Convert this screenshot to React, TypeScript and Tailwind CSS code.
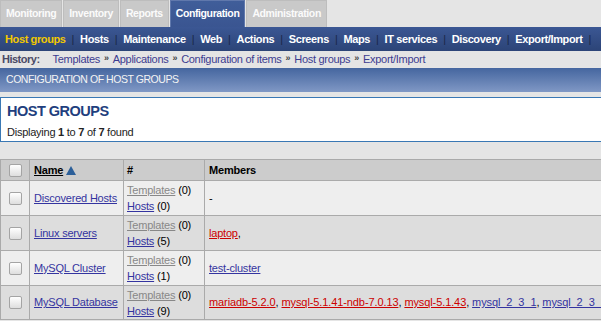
import React from "react";

function Checkbox() {
  return (
    <div className="w-[13px] h-[13px] rounded-[2px] border border-[#a4a4a4] bg-gradient-to-b from-[#ffffff] to-[#dedede]" />
  );
}

function Sep() {
  return <span className="mx-[6px] font-normal text-[#1a2748]">|</span>;
}

function Crumb() {
  return <span className="mx-[4px] text-[#444] font-bold text-[9px]">»</span>;
}

type Row = {
  name: string;
  hosts: number;
  members: React.ReactNode;
  bg: string;
  h: string;
};

const blue = "text-[#3434a0] underline decoration-[#3434a0]";
const red = "text-[#cc0000] underline decoration-[#cc0000]";

export default function App() {
  const tabs = ["Monitoring", "Inventory", "Reports", "Configuration", "Administration"];
  const sub = [
    "Host groups",
    "Hosts",
    "Maintenance",
    "Web",
    "Actions",
    "Screens",
    "Maps",
    "IT services",
    "Discovery",
    "Export/Import",
  ];
  const rows: Row[] = [
    { name: "Discovered Hosts", hosts: 0, members: <span className="text-black">-</span>, bg: "bg-[#eeeeee]", h: "h-[35px]" },
    {
      name: "Linux servers",
      hosts: 5,
      members: (
        <span>
          <span className={red}>laptop</span>,
        </span>
      ),
      bg: "bg-[#dddddd]",
      h: "h-[35px]",
    },
    { name: "MySQL Cluster", hosts: 1, members: <span className={blue}>test-cluster</span>, bg: "bg-[#eeeeee]", h: "h-[35px]" },
    {
      name: "MySQL Database",
      hosts: 9,
      members: (
        <span className="tracking-[-0.1px]">
          <span className={red}>mariadb-5.2.0</span>, <span className={red}>mysql-5.1.41-ndb-7.0.13</span>,{" "}
          <span className={red}>mysql-5.1.43</span>, <span className={blue}>mysql_2_3_1</span>,{" "}
          <span className={blue}>mysql_2_3_2</span>
        </span>
      ),
      bg: "bg-[#dddddd]",
      h: "h-[34px]",
    },
  ];

  return (
    <div className="w-[601px] h-[321px] overflow-hidden bg-[#e5e5e5] font-['Liberation_Sans',Arial,Helvetica,sans-serif]">
      {/* main tabs */}
      <div className="flex h-[27px] gap-[1px] whitespace-nowrap">
        {tabs.map((t) =>
          t === "Configuration" ? (
            <div
              key={t}
              className="h-full px-[6px] flex items-center text-[10.5px] font-bold tracking-[-0.4px] text-white bg-gradient-to-b from-[#405e9a] to-[#3a5591] shadow-[inset_1px_1px_0_#6078ac,inset_-1px_0_0_#6078ac]"
            >
              {t}
            </div>
          ) : (
            <div
              key={t}
              className="h-full px-[6px] flex items-center text-[10.5px] font-bold tracking-[-0.4px] text-[#fbfbfb] bg-[#c9c9c9] shadow-[inset_1px_1px_0_#bdbdbd,inset_-1px_0_0_#bdbdbd]"
            >
              {t}
            </div>
          )
        )}
      </div>

      {/* sub menu */}
      <div className="h-[24px] flex items-center pl-[5px] whitespace-nowrap text-[11px] tracking-[-0.38px] font-bold text-white bg-gradient-to-b from-[#3b5794] to-[#2c4477]">
        {sub.map((s, i) => (
          <React.Fragment key={s}>
            <span className={i === 0 ? "text-[#f2c800]" : ""}>{s}</span>
            <Sep />
          </React.Fragment>
        ))}
      </div>

      {/* history */}
      <div className="h-[16px] flex items-center pl-[2px] whitespace-nowrap text-[11px] tracking-[-0.3px] bg-[#e4e4e4]">
        <span className="font-bold text-[#4a4a66] tracking-[-0.5px]">History:</span>
        <span className="ml-[13px] text-[#3c3c90]">Templates</span>
        <Crumb />
        <span className="text-[#3c3c90]">Applications</span>
        <Crumb />
        <span className="text-[#3c3c90]">Configuration of items</span>
        <Crumb />
        <span className="text-[#3c3c90]">Host groups</span>
        <Crumb />
        <span className="text-[#3c3c90]">Export/Import</span>
      </div>

      {/* title bar */}
      <div className="mt-[1px] h-[24px] flex items-center pl-[6px] text-[10.5px] tracking-[-0.45px] text-[#f4f4f4] bg-gradient-to-b from-[#45669f] to-[#8098c5]">
        CONFIGURATION OF HOST GROUPS
      </div>

      {/* host groups box */}
      <div className="mt-[5px] w-[620px] h-[45px] bg-white border border-[#3a78b4] pl-[6px] pt-[3px]">
        <div className="text-[14.5px] tracking-[-0.5px] font-bold text-[#1f3f7e] leading-[20px]">HOST GROUPS</div>
        <div className="mt-[4px] text-[11px] tracking-[-0.25px] text-[#222] leading-[14px]">
          Displaying <b>1</b> to <b>7</b> of <b>7</b> found
        </div>
      </div>

      {/* table */}
      <div className="mt-[17px] w-[700px] border-t border-[#aaaaaa] text-[11px] tracking-[-0.2px] whitespace-nowrap">
        <div className="grid grid-cols-[29px_94px_81px_1fr] h-[21px] bg-[#cccccc] border-b border-[#aaaaaa]">
          <div className="border-l border-[#aaaaaa] flex items-center pl-[8px]">
            <Checkbox />
          </div>
          <div className="border-l border-[#aaaaaa] flex items-center pl-[4px] font-bold text-black">
            <span className="underline">Name</span>
            <svg width="10" height="9" viewBox="0 0 10 9" className="ml-[3px]">
              <polygon points="5,0 10,9 0,9" fill="#2c5f99" />
            </svg>
          </div>
          <div className="border-l border-[#aaaaaa] flex items-center pl-[3px] font-bold text-black">#</div>
          <div className="border-l border-[#aaaaaa] flex items-center pl-[4px] font-bold text-black">Members</div>
        </div>
        {rows.map((r) => (
          <div key={r.name} className={`grid grid-cols-[29px_94px_81px_1fr] ${r.h} ${r.bg} border-b border-[#aaaaaa]`}>
            <div className="border-l border-[#aaaaaa] flex items-center pl-[8px]">
              <Checkbox />
            </div>
            <div className="border-l border-[#aaaaaa] flex items-center pl-[4px]">
              <span className={blue}>{r.name}</span>
            </div>
            <div className="border-l border-[#aaaaaa] flex flex-col justify-center pl-[3px] leading-[16px] text-black">
              <div>
                <span className="text-[#888888] underline decoration-[#888888]">Templates</span> (0)
              </div>
              <div>
                <span className={blue}>Hosts</span> ({r.hosts})
              </div>
            </div>
            <div className="border-l border-[#aaaaaa] flex items-center pl-[4px] text-black">{r.members}</div>
          </div>
        ))}
      </div>
    </div>
  );
}
